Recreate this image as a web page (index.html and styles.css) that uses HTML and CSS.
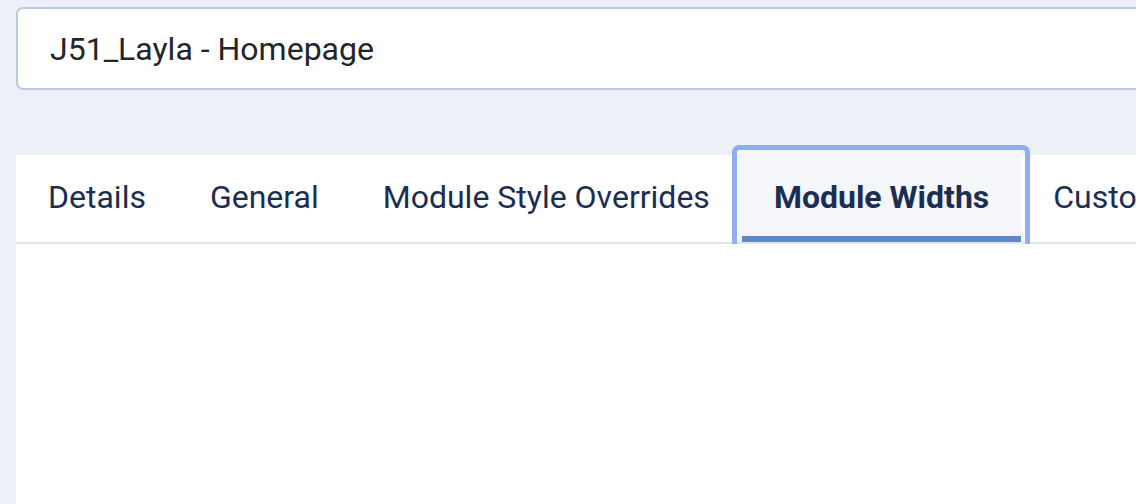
FILE: index.html
```html
<!DOCTYPE html>
<html lang="en">
<head>
<meta charset="utf-8">
<title>J51_Layla - Homepage</title>
<link rel="stylesheet" href="styles.css">
</head>
<body>
<div class="page">
  <div class="title-field">
    <input class="title-input" type="text" value="J51_Layla - Homepage">
  </div>
  <div class="panel">
    <div class="tabs" role="tablist">
      <button class="tab" role="tab">Details</button>
      <button class="tab" role="tab">General</button>
      <button class="tab" role="tab">Module Style Overrides</button>
      <button class="tab tab-active" role="tab" aria-selected="true">Module Widths</button>
      <button class="tab" role="tab">Custom Code</button>
    </div>
    <div class="tab-body"></div>
  </div>
</div>
</body>
</html>
```
FILE: styles.css
```css
* { box-sizing: border-box; }
html, body {
  margin: 0;
  padding: 0;
  height: 100%;
  overflow: hidden;
  background: #edf1f7;
}
.page {
  padding: 7px 0 0 16px;
  font-family: Roboto, "Noto Sans", sans-serif;
  width: 1136px;
  height: 504px;
  overflow: hidden;
}
.title-field {
  display: flex;
  width: 1200px;
}
.title-input {
  width: 1200px;
  height: 83px;
  border: 2px solid #bccae1;
  border-radius: 7px;
  background: #fff;
  padding: 0 32px;
  font-family: Roboto, "Noto Sans", sans-serif;
  font-size: 32px;
  color: #22262b;
  outline: none;
}
.panel {
  margin-top: 65px;
  background: #fff;
  width: 1200px;
  height: 360px;
}
.tabs {
  display: flex;
  height: 89px;
  border-bottom: 2px solid #dfe4ef;
  white-space: nowrap;
}
.tab {
  position: relative;
  flex: none;
  height: 87px;
  margin: 0;
  padding: 0 32px 3px;
  border: 0;
  background: transparent;
  font-family: Roboto, "Noto Sans", sans-serif;
  font-size: 32px;
  font-weight: 400;
  color: #1b2e52;
  cursor: pointer;
}
.tab-active {
  font-weight: 700;
  background: #f4f6fa;
  box-shadow: -4px 0 0 #f4f6fa;
  height: 92px;
  margin-top: -5px;
  padding-top: 5px;
}
.tab-active::before {
  content: "";
  position: absolute;
  left: -10px;
  right: -9px;
  top: -5px;
  bottom: -2px;
  border: 5px solid #90adef;
  border-bottom: 0;
  border-radius: 7px 7px 0 0;
  pointer-events: none;
}
.tab-active::after {
  content: "";
  position: absolute;
  left: 0;
  right: 0;
  bottom: 0;
  height: 6px;
  background: #6088c4;
}
.tab-body {
  height: 260px;
}
```
